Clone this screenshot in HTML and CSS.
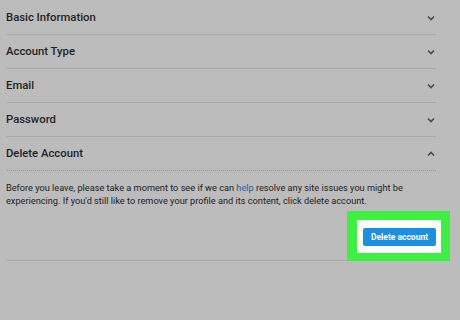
FILE: index.html
```html
<!DOCTYPE html>
<html lang="en">
<head>
    <meta charset="UTF-8">
    <title>Account Settings</title>
    <link rel="stylesheet" href="styles.css">
</head>
<body>
    <div class="settings">
        <div class="section">
            <span class="sectionTitle">Basic Information</span>
            <svg class="chevron" width="8" height="6" viewBox="0 0 8 6"><path d="M1 1.5 L4 4.5 L7 1.5" /></svg>
        </div>
        <div class="section">
            <span class="sectionTitle">Account Type</span>
            <svg class="chevron" width="8" height="6" viewBox="0 0 8 6"><path d="M1 1.5 L4 4.5 L7 1.5" /></svg>
        </div>
        <div class="section">
            <span class="sectionTitle">Email</span>
            <svg class="chevron" width="8" height="6" viewBox="0 0 8 6"><path d="M1 1.5 L4 4.5 L7 1.5" /></svg>
        </div>
        <div class="section">
            <span class="sectionTitle">Password</span>
            <svg class="chevron" width="8" height="6" viewBox="0 0 8 6"><path d="M1 1.5 L4 4.5 L7 1.5" /></svg>
        </div>
        <div class="section open">
            <span class="sectionTitle">Delete Account</span>
            <svg class="chevron" width="8" height="6" viewBox="0 0 8 6"><path d="M1 4.5 L4 1.5 L7 4.5" /></svg>
        </div>
        <div class="panel">
            <p class="panelText">Before you leave, please take a moment to see if we can <a href="#">help</a> resolve any site issues you might be experiencing. If you'd still like to remove your profile and its content, click delete account.</p>
            <div class="panelActions">
                <div class="highlight">
                    <button class="deleteButton">Delete account</button>
                </div>
            </div>
        </div>
    </div>
</body>
</html>
```

FILE: styles.css
```css
html, body {
    margin: 0;
    background: #bcbcbc;
}

body {
    font-family: "Roboto", "Liberation Sans", sans-serif;
    color: #1f1f1f;
}

.settings {
    width: 430px;
    margin-left: 6px;
    padding-top: 1px;
}

.section {
    display: flex;
    align-items: center;
    justify-content: space-between;
    height: 33px;
    border-bottom: 1px solid #a9a9a9;
    margin-left: 1px;
    padding-right: 1px;
}

.section.open {
    border-bottom: 1px dotted #9a9a9a;
}

.sectionTitle {
    font-size: 11.3px;
    font-weight: 500;
    margin-left: -1px;
}

.chevron {
    fill: none;
    stroke: #4a4a4a;
    stroke-width: 1.6;
}

.panel {
    border-bottom: 1px solid #a9a9a9;
    margin-left: 1px;
}

.panelText {
    margin: 10px 0 0 -1px;
    font-size: 9.2px;
    line-height: 13px;
    color: #222;
}

.panelText a {
    color: #2a5d9c;
    text-decoration: none;
}

.panelActions {
    display: flex;
    justify-content: flex-end;
    padding-top: 4px;
    height: 49px;
}

.highlight {
    position: relative;
    z-index: 1;
    align-self: flex-start;
    background: #ffffff;
    border: 9px solid #3ef03f;
    border-left-width: 10px;
    border-bottom-width: 10px;
    padding: 8px 5px 7px 6px;
    margin-right: -14px;
}

.deleteButton {
    display: block;
    width: 73px;
    height: 18px;
    padding: 0;
    border: 0;
    border-radius: 2px;
    background: #1a8fe3;
    color: #ffffff;
    font-family: "Roboto", "Liberation Sans", sans-serif;
    font-size: 8.5px;
    font-weight: 700;
}
```
